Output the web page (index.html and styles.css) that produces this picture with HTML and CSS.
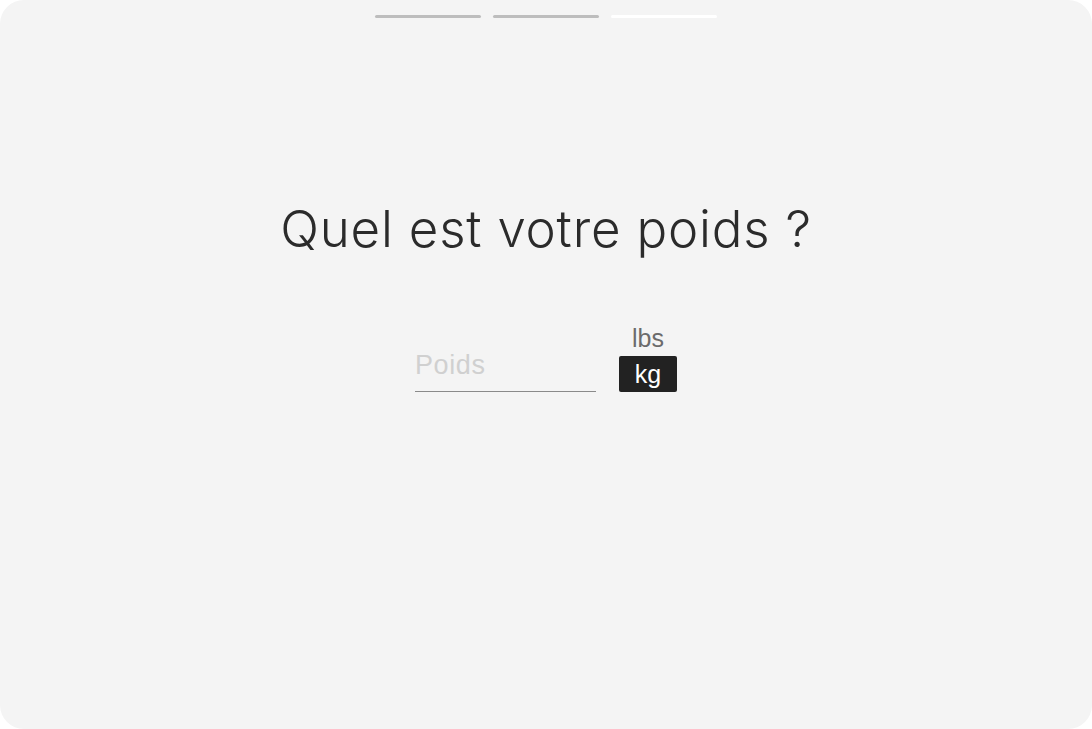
FILE: index.html
```html
<!DOCTYPE html>
<html lang="fr">
<head>
    <meta charset="UTF-8">
    <meta name="viewport" content="width=device-width, initial-scale=1.0">
    <title>Votre poids</title>
    <link rel="stylesheet" href="styles.css">
</head>
<body>
    <div class="screen">
        <div class="steps">
            <div class="step done"></div>
            <div class="step done"></div>
            <div class="step current"></div>
        </div>

        <h1 class="question">Quel est votre poids ?</h1>

        <div class="weight-form">
            <input type="number" class="weight-input" placeholder="Poids">
            <div class="units">
                <button class="unit">lbs</button>
                <button class="unit active">kg</button>
            </div>
        </div>
    </div>
</body>
</html>
```

FILE: styles.css
```css
html, body {
    margin: 0;
    height: 100%;
    background: #ffffff;
}

body {
    font-family: "Liberation Sans", Arial, sans-serif;
}

.screen {
    box-sizing: border-box;
    height: 100%;
    background: #f4f4f4;
    border-radius: 24px;
    display: flex;
    flex-direction: column;
    align-items: center;
    padding-top: 15px;
}

.steps {
    display: flex;
    gap: 12px;
}

.step {
    width: 106px;
    height: 3px;
    border-radius: 2px;
    background: #bdbdbd;
}

.step.current {
    background: #ffffff;
}

.question {
    margin: 183px 0 0;
    font-family: Inter, "Liberation Sans", sans-serif;
    font-size: 51px;
    font-weight: 300;
    letter-spacing: 0.8px;
    color: #2b2b2b;
    line-height: 56px;
}

.weight-form {
    display: flex;
    align-items: flex-end;
    gap: 23px;
    margin-top: 66px;
}

.weight-input {
    width: 181px;
    box-sizing: border-box;
    border: none;
    border-bottom: 1px solid #8a8a8a;
    background: transparent;
    font-family: inherit;
    font-size: 27px;
    letter-spacing: 0.6px;
    color: #333;
    padding: 0 0 10px;
    outline: none;
}

.weight-input::placeholder {
    color: #d0d0d0;
}

.units {
    display: flex;
    flex-direction: column;
    align-items: center;
}

.unit {
    border: none;
    background: transparent;
    font-family: inherit;
    font-size: 25px;
    color: #6b6b6b;
    width: 58px;
    height: 32px;
    padding: 0 0 2px;
    cursor: pointer;
}

.unit.active {
    height: 36px;
    margin-top: 1px;
    padding: 0;
    background: #222222;
    color: #ffffff;
    border-radius: 2px;
}
```
